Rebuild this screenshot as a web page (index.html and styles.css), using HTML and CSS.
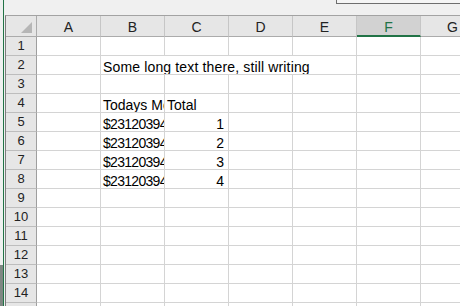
FILE: index.html
```html
<!DOCTYPE html>
<html>
<head>
    <meta charset="utf-8">
    <title>Sheet1</title>
    <link rel="stylesheet" href="styles.css">
</head>
<body>
    <div class="screen">
        <div class="behind"></div>
        <div class="app">
            <div class="toolbar">
                <div class="namebox"></div>
            </div>
            <div class="sheet">
                <div class="corner"></div>
                <div class="hd">A</div>
                <div class="hd">B</div>
                <div class="hd">C</div>
                <div class="hd">D</div>
                <div class="hd">E</div>
                <div class="hd sel">F</div>
                <div class="hd">G</div>

                <div class="rh">1</div>
                <div class="c"></div><div class="c"></div><div class="c"></div><div class="c"></div><div class="c"></div><div class="c"></div><div class="c"></div>

                <div class="rh">2</div>
                <div class="c"></div>
                <div class="c wide">Some long text there, still writing</div>
                <div class="c"></div><div class="c"></div>

                <div class="rh">3</div>
                <div class="c"></div><div class="c"></div><div class="c"></div><div class="c"></div><div class="c"></div><div class="c"></div><div class="c"></div>

                <div class="rh">4</div>
                <div class="c"></div>
                <div class="c">Todays Money</div>
                <div class="c">Total</div>
                <div class="c"></div><div class="c"></div><div class="c"></div><div class="c"></div>

                <div class="rh">5</div>
                <div class="c"></div>
                <div class="c money">$2312039475.00</div>
                <div class="c num">1</div>
                <div class="c"></div><div class="c"></div><div class="c"></div><div class="c"></div>

                <div class="rh">6</div>
                <div class="c"></div>
                <div class="c money">$2312039475.00</div>
                <div class="c num">2</div>
                <div class="c"></div><div class="c"></div><div class="c"></div><div class="c"></div>

                <div class="rh">7</div>
                <div class="c"></div>
                <div class="c money">$2312039475.00</div>
                <div class="c num">3</div>
                <div class="c"></div><div class="c"></div><div class="c"></div><div class="c"></div>

                <div class="rh">8</div>
                <div class="c"></div>
                <div class="c money">$2312039475.00</div>
                <div class="c num">4</div>
                <div class="c"></div><div class="c"></div><div class="c"></div><div class="c"></div>

                <div class="rh">9</div>
                <div class="c"></div><div class="c"></div><div class="c"></div><div class="c"></div><div class="c"></div><div class="c"></div><div class="c"></div>

                <div class="rh">10</div>
                <div class="c"></div><div class="c"></div><div class="c"></div><div class="c"></div><div class="c"></div><div class="c"></div><div class="c"></div>

                <div class="rh">11</div>
                <div class="c"></div><div class="c"></div><div class="c"></div><div class="c"></div><div class="c"></div><div class="c"></div><div class="c"></div>

                <div class="rh">12</div>
                <div class="c"></div><div class="c"></div><div class="c"></div><div class="c"></div><div class="c"></div><div class="c"></div><div class="c"></div>

                <div class="rh">13</div>
                <div class="c"></div><div class="c"></div><div class="c"></div><div class="c"></div><div class="c"></div><div class="c"></div><div class="c"></div>

                <div class="rh">14</div>
                <div class="c"></div><div class="c"></div><div class="c"></div><div class="c"></div><div class="c"></div><div class="c"></div><div class="c"></div>

                <div class="rh">15</div>
                <div class="c"></div><div class="c"></div><div class="c"></div><div class="c"></div><div class="c"></div><div class="c"></div><div class="c"></div>
            </div>
        </div>
    </div>
</body>
</html>
```

FILE: styles.css
```css
html, body {
    margin: 0;
    padding: 0;
}
body {
    width: 460px;
    height: 306px;
    overflow: hidden;
    background: #f0f0f0;
    font-family: "Liberation Sans", Arial, sans-serif;
}
.screen {
    display: flex;
    height: 306px;
}
/* strip of the window behind */
.behind {
    width: 3px;
    flex: none;
    background: linear-gradient(to bottom, #eef0ef 0, #eef0ef 265px, #7f8783 265px);
}
.app {
    flex: 1;
    min-width: 0;
    border-left: 1px solid #217346;
    padding-left: 1px;
    display: flex;
    flex-direction: column;
    overflow: hidden;
}
.toolbar {
    height: 15px;
    flex: none;
    display: flex;
    justify-content: flex-end;
    align-items: flex-start;
}
.namebox {
    width: 124px;
    height: 3px;
    margin-right: -1px;
    background: #f5f5f5;
    border-left: 1px solid #6e6e6e;
    border-bottom: 1px solid #6e6e6e;
}
.sheet {
    flex: 1;
    display: grid;
    grid-template-columns: 31px repeat(7, 64px);
    grid-template-rows: 21px;
    grid-auto-rows: 19px;
    border-top: 1px solid #a3a3a3;
    border-left: 1px solid #7c7c7c;
    background: #fff;
    overflow: hidden;
}
.corner {
    background: #e6e6e6;
    border-right: 1px solid #ababab;
    border-bottom: 1px solid #ababab;
    display: flex;
    justify-content: flex-end;
    align-items: flex-end;
    padding: 0 4px 3px 0;
    box-sizing: border-box;
}
.corner::after {
    content: "";
    width: 0;
    height: 0;
    border-left: 11px solid transparent;
    border-bottom: 11px solid #b6b6b6;
}
.hd {
    background: #e6e6e6;
    border-right: 1px solid #c6c6c6;
    border-bottom: 1px solid #ababab;
    box-sizing: border-box;
    text-align: center;
    font-size: 14px;
    line-height: 20px;
    padding-top: 1px;
    color: #222;
}
.hd.sel {
    background: #d2d2d2;
    color: #217346;
    border-bottom: 2px solid #217346;
}
.rh {
    background: #e6e6e6;
    border-right: 1px solid #9f9f9f;
    border-bottom: 1px solid #bdbdbd;
    box-sizing: border-box;
    text-align: center;
    font-size: 13px;
    line-height: 18px;
    color: #222;
}
.c {
    border-right: 1px solid #d4d4d4;
    border-bottom: 1px solid #d4d4d4;
    box-sizing: border-box;
    font-size: 14px;
    line-height: 14px;
    padding: 4px 2px 0 2px;
    white-space: nowrap;
    overflow: hidden;
    color: #000;
}
.wide {
    grid-column: span 4;
    letter-spacing: 0.15px;
}
.money {
    letter-spacing: -0.7px;
}
.num {
    text-align: right;
    padding-right: 4px;
}
```
